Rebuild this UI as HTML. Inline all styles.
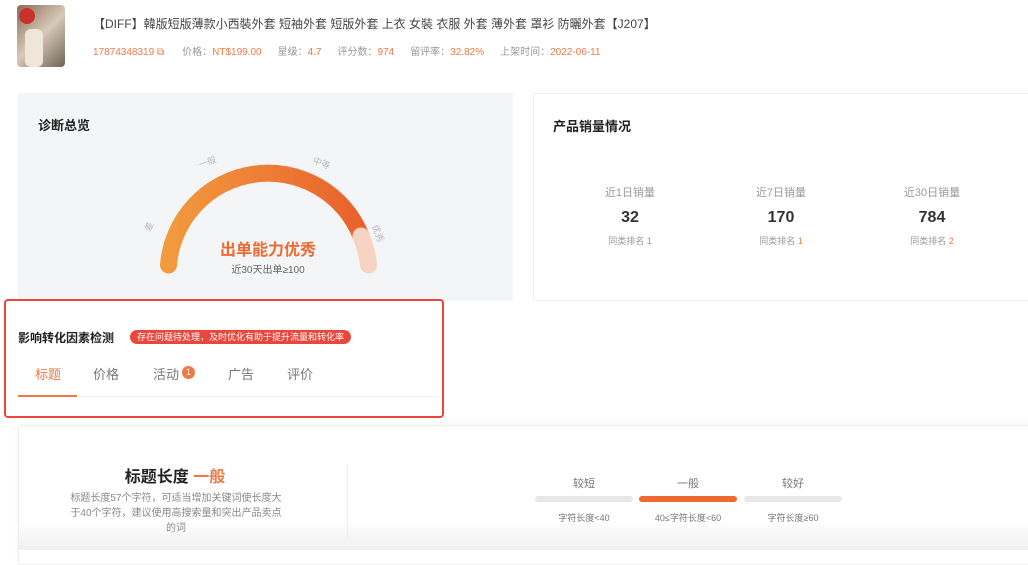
<!DOCTYPE html>
<html><head><meta charset="utf-8"><style>
*{margin:0;padding:0;box-sizing:border-box}
body{width:1028px;height:550px;background:#fff;font-family:"Liberation Sans","Noto Sans CJK SC",sans-serif;position:relative;overflow:hidden;color:#333}
.abs{position:absolute}
.g{color:#999}.o{color:#ee7a45}
</style></head><body>
<div class="abs" style="left:17px;top:5px;width:48px;height:62px;border-radius:4px;background:linear-gradient(135deg,#8b6a55,#d8c9b8 50%,#6d6458);overflow:hidden">
 <div class="abs" style="left:2px;top:3px;width:16px;height:16px;border-radius:50%;background:#c8322b"></div>
 <div class="abs" style="left:8px;top:24px;width:18px;height:38px;background:#efe6da;border-radius:6px"></div>
</div>
<div class="abs" style="left:93px;top:15px;font-size:12px;color:#444;white-space:nowrap">【DIFF】韓版短版薄款小西裝外套 短袖外套 短版外套 上衣 女裝 衣服 外套 薄外套 罩衫 防曬外套【J207】</div>
<div class="abs" style="left:93px;top:43px;font-size:10px;white-space:nowrap"><span class="o">17874348319 ⧉</span><span class="g" style="margin-left:18px">价格：</span><span class="o">NT$199.00</span><span class="g" style="margin-left:16px">星级：</span><span class="o">4.7</span><span class="g" style="margin-left:16px">评分数：</span><span class="o">974</span><span class="g" style="margin-left:16px">留评率：</span><span class="o">32.82%</span><span class="g" style="margin-left:16px">上架时间：</span><span class="o">2022-06-11</span></div>

<div class="abs" style="left:18px;top:93px;width:495px;height:208px;background:#f4f5f7"></div>
<div class="abs" style="left:38px;top:115px;font-size:13px;font-weight:bold;color:#222">诊断总览</div>
<svg class="abs" style="left:0;top:0" width="520" height="300">
 <defs><linearGradient id="gr" x1="0" x2="1"><stop offset="0" stop-color="#f29a3e"/><stop offset="1" stop-color="#e9612c"/></linearGradient></defs>
 <path d="M168.5 265 A100 100 0 0 1 361 236" fill="none" stroke="url(#gr)" stroke-width="17" stroke-linecap="round"/>
 <path d="M361 236 A100 100 0 0 1 368.5 265" fill="none" stroke="#f6d3c3" stroke-width="17" stroke-linecap="round"/>
 <g font-size="9" fill="#bbb" font-family="Liberation Sans,Noto Sans CJK SC,sans-serif">
  <text x="150" y="232" transform="rotate(-65 150 232)">差</text>
  <text x="200" y="168" transform="rotate(-20 200 168)">一般</text>
  <text x="312" y="163" transform="rotate(20 312 163)">中等</text>
  <text x="372" y="226" transform="rotate(70 372 226)">优秀</text>
 </g>
</svg>
<div class="abs" style="left:168px;top:236px;width:200px;text-align:center;font-size:16px;font-weight:bold;color:#ee6a30">出单能力优秀</div>
<div class="abs" style="left:168px;top:261px;width:200px;text-align:center;font-size:10px;color:#666">近30天出单≥100</div>

<div class="abs" style="left:533px;top:93px;width:500px;height:208px;border:1px solid #eee;border-radius:3px"></div>
<div class="abs" style="left:553px;top:116px;font-size:13px;font-weight:bold;color:#222">产品销量情况</div>
<div class="abs" style="left:580px;top:184px;width:100px;text-align:center"><div class="g" style="font-size:11px">近1日销量</div><div style="font-size:16px;font-weight:bold;margin-top:9px">32</div><div style="font-size:9px;margin-top:7px"><span class="g">同类排名</span> <span class="o">1</span></div></div>
<div class="abs" style="left:731px;top:184px;width:100px;text-align:center"><div class="g" style="font-size:11px">近7日销量</div><div style="font-size:16px;font-weight:bold;margin-top:9px">170</div><div style="font-size:9px;margin-top:7px"><span class="g">同类排名</span> <span class="o">1</span></div></div>
<div class="abs" style="left:882px;top:184px;width:100px;text-align:center"><div class="g" style="font-size:11px">近30日销量</div><div style="font-size:16px;font-weight:bold;margin-top:9px">784</div><div style="font-size:9px;margin-top:7px"><span class="g">同类排名</span> <span class="o">2</span></div></div>

<div class="abs" style="left:4px;top:299px;width:440px;height:119px;border:2px solid #e8473b;border-radius:4px"></div>
<div class="abs" style="left:18px;top:329px;font-size:12px;font-weight:bold;color:#222">影响转化因素检测</div>
<div class="abs" style="left:130px;top:330px;height:14px;line-height:14px;padding:0 7px;background:#e8473b;color:#fff;font-size:9px;border-radius:7px">存在问题待处理，及时优化有助于提升流量和转化率</div>
<div class="abs" style="left:18px;top:396px;width:420px;height:1px;background:#f0f0f0"></div>
<div class="abs" style="left:18px;top:395px;width:59px;height:2px;background:#ee7a45"></div>
<div class="abs" style="top:364px;font-size:13px;left:35px;color:#ee7a45">标题</div>
<div class="abs" style="top:364px;font-size:13px;left:93px;color:#777">价格</div>
<div class="abs" style="top:364px;font-size:13px;left:153px;color:#777">活动</div>
<div class="abs" style="top:366px;left:182px;width:13px;height:13px;border-radius:50%;background:#ee7a45;color:#fff;font-size:9px;text-align:center;line-height:13px">1</div>
<div class="abs" style="top:364px;font-size:13px;left:228px;color:#777">广告</div>
<div class="abs" style="top:364px;font-size:13px;left:287px;color:#777">评价</div>

<div class="abs" style="left:18px;top:425px;width:1020px;height:140px;border:1px solid #eee;border-radius:3px;box-shadow:0 -2px 8px rgba(0,0,0,.04)"></div>
<div class="abs" style="left:18px;top:520px;width:1010px;height:30px;background:linear-gradient(#fff0,#f0f0f0)"></div>
<div class="abs" style="left:60px;top:463px;width:230px;text-align:center;font-size:16px;font-weight:bold;color:#222">标题长度 <span style="color:#ee7a45">一般</span></div>
<div class="abs" style="left:66px;top:491px;width:220px;text-align:center;font-size:10px;line-height:15px;color:#888">标题长度57个字符，可适当增加关键词使长度大于40个字符，建议使用高搜索量和突出产品卖点的词</div>
<div class="abs" style="left:347px;top:464px;width:1px;height:75px;background:#eee"></div>
<div class="abs" style="left:535px;top:475px;width:98px;text-align:center;font-size:11px;color:#777">较短</div>
<div class="abs" style="left:639px;top:475px;width:98px;text-align:center;font-size:11px;color:#777">一般</div>
<div class="abs" style="left:744px;top:475px;width:98px;text-align:center;font-size:11px;color:#777">较好</div>
<div class="abs" style="left:535px;top:496px;width:98px;height:6px;border-radius:3px;background:#e8e8e8"></div>
<div class="abs" style="left:639px;top:496px;width:98px;height:6px;border-radius:3px;background:#ee6a30"></div>
<div class="abs" style="left:744px;top:496px;width:98px;height:6px;border-radius:3px;background:#e8e8e8"></div>
<div class="abs" style="left:535px;top:511px;width:98px;text-align:center;font-size:9px;color:#777">字符长度&lt;40</div>
<div class="abs" style="left:634px;top:511px;width:108px;text-align:center;font-size:9px;color:#777">40≤字符长度&lt;60</div>
<div class="abs" style="left:744px;top:511px;width:98px;text-align:center;font-size:9px;color:#777">字符长度≥60</div>
</body></html>
